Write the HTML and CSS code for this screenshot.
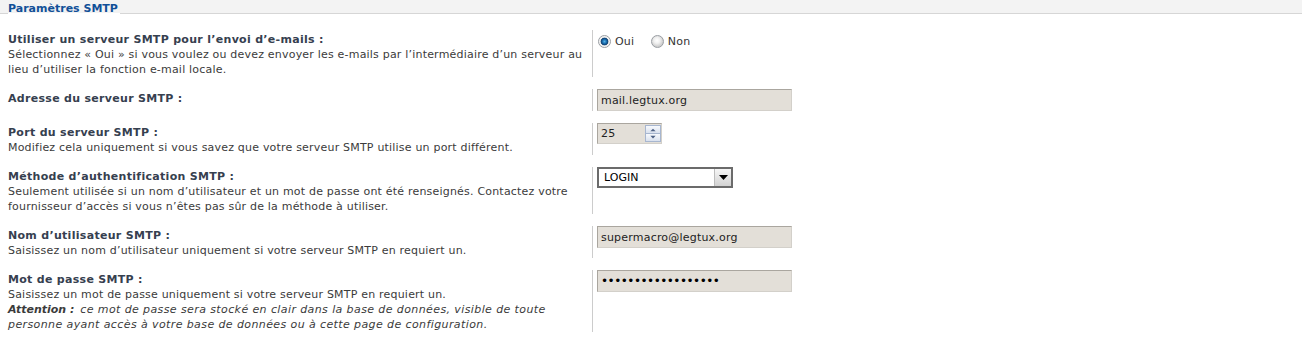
FILE: index.html
```html
<!DOCTYPE html>
<html lang="fr">

<head>
  <meta charset="UTF-8">
  <title>Paramètres SMTP</title>
  <link rel="stylesheet" href="styles.css">
</head>

<body>

  <fieldset class="settings">
    <legend>Paramètres SMTP</legend>

    <dl class="row">
      <dt>
        <label>Utiliser un serveur SMTP pour l’envoi d’e-mails :</label>
        <span class="explain">Sélectionnez «&nbsp;Oui&nbsp;» si vous voulez ou devez envoyer les e-mails par l’intermédiaire d’un serveur au lieu d’utiliser la fonction e-mail locale.</span>
      </dt>
      <dd class="radios">
        <label class="radio"><input type="radio" name="smtp" checked> Oui</label>
        <label class="radio"><input type="radio" name="smtp"> Non</label>
      </dd>
    </dl>

    <dl class="row">
      <dt><label for="host">Adresse du serveur SMTP :</label></dt>
      <dd><input class="text wide" id="host" type="text" value="mail.legtux.org"></dd>
    </dl>

    <dl class="row">
      <dt>
        <label for="port">Port du serveur SMTP :</label>
        <span class="explain">Modifiez cela uniquement si vous savez que votre serveur SMTP utilise un port différent.</span>
      </dt>
      <dd>
        <span class="spin">
          <input class="text short" id="port" type="text" value="25">
          <span class="spin-buttons">
            <svg width="14" height="8" viewBox="0 0 14 8"><path d="M4 6h6L7 3z" fill="#4d6185"/></svg>
            <svg width="14" height="8" viewBox="0 0 14 8"><path d="M4 2h6L7 5z" fill="#4d6185"/></svg>
          </span>
        </span>
      </dd>
    </dl>

    <dl class="row">
      <dt>
        <label for="auth">Méthode d’authentification SMTP :</label>
        <span class="explain">Seulement utilisée si un nom d’utilisateur et un mot de passe ont été renseignés. Contactez votre fournisseur d’accès si vous n’êtes pas sûr de la méthode à utiliser.</span>
      </dt>
      <dd>
        <span class="dropdown">
          <select id="auth">
            <option>LOGIN</option>
            <option>PLAIN</option>
            <option>CRAM-MD5</option>
          </select>
          <span class="dropdown-arrow">
            <svg width="9" height="5" viewBox="0 0 9 5"><path d="M0 0h9L4.5 5z" fill="#000"/></svg>
          </span>
        </span>
      </dd>
    </dl>

    <dl class="row">
      <dt>
        <label for="user">Nom d’utilisateur SMTP :</label>
        <span class="explain">Saisissez un nom d’utilisateur uniquement si votre serveur SMTP en requiert un.</span>
      </dt>
      <dd><input class="text wide" id="user" type="text" value="supermacro@legtux.org"></dd>
    </dl>

    <dl class="row">
      <dt>
        <label for="pass">Mot de passe SMTP :</label>
        <span class="explain">Saisissez un mot de passe uniquement si votre serveur SMTP en requiert un.</span>
        <span class="explain warn"><strong>Attention :</strong> ce mot de passe sera stocké en clair dans la base de données, visible de toute personne ayant accès à votre base de données ou à cette page de configuration.</span>
      </dt>
      <dd><input class="text wide pass" id="pass" type="password" value="supermacro2011xyz1"></dd>
    </dl>
  </fieldset>

</body>

</html>
```

FILE: styles.css
```css
html {
  background: #ffffff;
}

body {
  margin: 0;
  padding: 0;
  font-family: 'DejaVu Sans', Verdana, sans-serif;
  font-size: 11px;
  line-height: 15px;
  color: #333333;
  background: #ffffff linear-gradient(#f3f3f3, #f3f3f3) no-repeat;
  background-size: 100% 13px;
}

.settings {
  margin: 0;
  padding: 4px 8px 0;
  border: none;
  border-top: 1px solid #d6d6d6;
}

.settings legend {
  padding: 2px 2px 11px 0;
  line-height: 13px;
  font-size: 11px;
  font-weight: bold;
  color: #115098;
}

.row {
  display: flex;
  margin: 0 0 12px;
}

.row dt {
  flex: 0 0 585px;
  box-sizing: border-box;
  border-right: 1px solid #cccccc;
  padding: 2px 4px 0 0;
}

.row dt label {
  display: block;
  font-weight: bold;
  letter-spacing: 0.3px;
  color: #36404f;
}

.explain {
  display: block;
  letter-spacing: 0.2px;
  color: #3b3b3b;
}

.warn {
  font-style: italic;
  letter-spacing: 0.4px;
}

.warn strong {
  margin-right: 2px;
  letter-spacing: 0;
}

.row dd {
  margin: 0;
  padding-left: 4px;
}

.radios {
  padding-top: 4px;
}

.radio {
  display: inline-flex;
  align-items: center;
  margin-right: 12px;
  letter-spacing: 0.2px;
  color: #333333;
}

.radio input {
  -webkit-appearance: none;
  appearance: none;
  width: 13px;
  height: 13px;
  margin: 0 4px 0 1px;
  border: 1px solid #9a9ea3;
  border-radius: 50%;
  background: radial-gradient(circle at 45% 40%, #ffffff 0, #f0f0f0 3px, #cfcfcf 6px);
}

.radio input:checked {
  background: radial-gradient(circle at 50% 50%, #54b4e8 0, #1c6fb0 2px, #0d3f70 3.5px, #e8e8e8 4.2px, #ffffff 6px);
}

.text {
  box-sizing: border-box;
  height: 22px;
  padding: 0 3px;
  border: 1px solid;
  border-color: #aaa69f #d3d0ca #d3d0ca #aaa69f;
  background: #e3dfd8;
  font-family: 'DejaVu Sans', Verdana, sans-serif;
  font-size: 11px;
  letter-spacing: 0.2px;
  color: #222222;
  outline: none;
}

.wide {
  width: 195px;
}

.pass {
  font-size: 12px;
  letter-spacing: -0.5px;
  color: #000000;
}

.short {
  width: 65px;
  height: 21px;
}

.spin {
  position: relative;
  display: inline-block;
}

.spin-buttons {
  position: absolute;
  top: 2px;
  right: 1px;
  display: flex;
  flex-direction: column;
  width: 16px;
  height: 17px;
}

.spin-buttons svg {
  flex: 1;
  width: 14px;
  border: 1px solid #a7b6cf;
  background: linear-gradient(#f7f9fd, #d9e1ee);
}

.spin-buttons svg + svg {
  border-top: none;
}

.dropdown {
  position: relative;
  display: inline-block;
}

.dropdown select {
  -webkit-appearance: none;
  appearance: none;
  box-sizing: border-box;
  width: 136px;
  height: 21px;
  padding: 0 0 0 5px;
  border: 2px solid #6b6b6b;
  border-radius: 0;
  background: #ffffff;
  font-family: 'DejaVu Sans', Verdana, sans-serif;
  font-size: 11px;
  color: #000000;
}

.dropdown-arrow {
  position: absolute;
  top: 2px;
  right: 2px;
  display: flex;
  align-items: center;
  justify-content: center;
  width: 16px;
  height: 17px;
  border-left: 1px solid #bdbdbd;
  background: linear-gradient(#f6f6f6, #d2d2d2);
}
```
